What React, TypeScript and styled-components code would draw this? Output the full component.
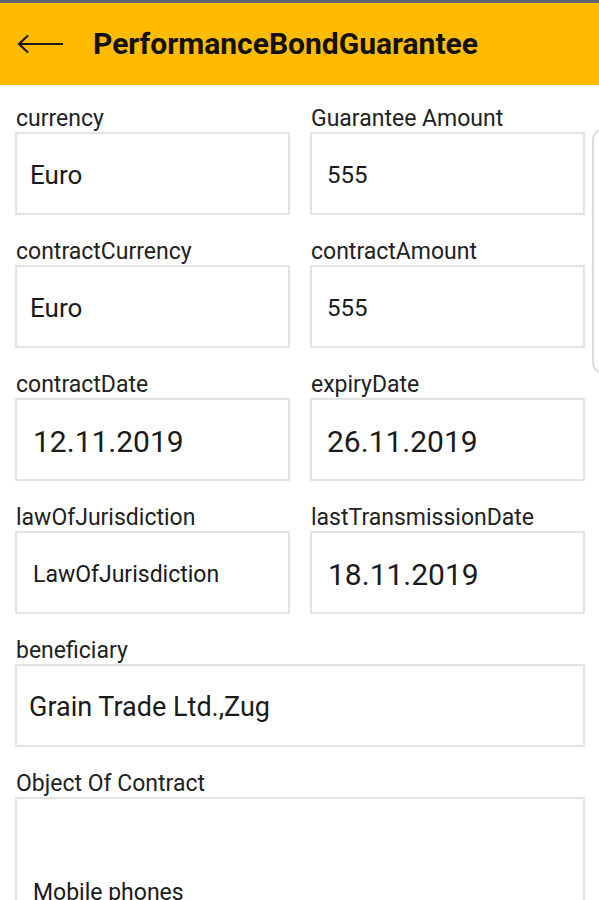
import React from "react";
import styled, { createGlobalStyle } from "styled-components";

const Global = createGlobalStyle`
  html, body { margin: 0; padding: 0; background: #ffffff; }
  body { font-family: Roboto, "Noto Sans", "Liberation Sans", sans-serif; color: #1f1f1f; overflow: hidden; }
  * { box-sizing: border-box; }
`;

const Screen = styled.div`
  position: relative;
  width: 599px;
  height: 900px;
  overflow: hidden;
  background: #ffffff;
`;

const StatusStrip = styled.div`
  height: 3px;
  background: #5d6770;
`;

const Toolbar = styled.header`
  height: 82px;
  background: #ffbb00;
  display: flex;
  align-items: center;
  padding-left: 17px;
  gap: 28px;
`;

const BackButton = styled.button`
  border: 0;
  background: transparent;
  padding: 0;
  width: 48px;
  height: 24px;
  display: flex;
  align-items: center;
`;

const Title = styled.h1`
  margin: 0;
  font-family: Roboto, "Liberation Sans", sans-serif;
  font-weight: 700;
  font-size: 30px;
  line-height: 36px;
  color: #111;
  letter-spacing: 0;
`;

const Form = styled.main`
  padding: 20px 14px 0 15px;
  display: grid;
  grid-template-columns: 275px 275px;
  column-gap: 20px;
  row-gap: 23px;
`;

const Field = styled.div<{ $wide?: boolean }>`
  display: flex;
  flex-direction: column;
  grid-column: ${(p) => (p.$wide ? "1 / span 2" : "auto")};
`;

const Label = styled.label`
  font-size: 23px;
  line-height: 27px;
  height: 27px;
  color: #222;
  padding-left: 1px;
  white-space: nowrap;
`;

const Box = styled.div<{ $size: number; $pad: number; $height?: number; $top?: number }>`
  height: ${(p) => p.$height ?? 83}px;
  border: 2px solid #e3e3e3;
  background: #fff;
  display: flex;
  align-items: ${(p) => (p.$top ? "flex-start" : "center")};
  padding-left: ${(p) => p.$pad}px;
  padding-top: ${(p) => p.$top ?? 4}px;
  font-size: ${(p) => p.$size}px;
  line-height: 1.2;
  color: #1a1a1a;
  white-space: nowrap;
`;

const SideHandle = styled.div`
  position: absolute;
  left: 592px;
  top: 129px;
  width: 24px;
  height: 244px;
  border: 2px solid #dcdcdc;
  border-radius: 10px;
  background: #fff;
`;

type F = { label: string; value: string; size: number; pad: number; wide?: boolean; height?: number; top?: number };

const fields: F[] = [
  { label: "currency", value: "Euro", size: 26, pad: 13 },
  { label: "Guarantee Amount", value: "555", size: 24, pad: 15 },
  { label: "contractCurrency", value: "Euro", size: 26, pad: 13 },
  { label: "contractAmount", value: "555", size: 24, pad: 15 },
  { label: "contractDate", value: "12.11.2019", size: 30, pad: 16 },
  { label: "expiryDate", value: "26.11.2019", size: 30, pad: 15 },
  { label: "lawOfJurisdiction", value: "LawOfJurisdiction", size: 23, pad: 16 },
  { label: "lastTransmissionDate", value: "18.11.2019", size: 30, pad: 16 },
  { label: "beneficiary", value: "Grain Trade Ltd.,Zug", size: 27, pad: 12, wide: true },
  { label: "Object Of Contract", value: "Mobile phones", size: 23, pad: 16, wide: true, height: 200, top: 80 },
];

export default function App() {
  return (
    <Screen>
      <Global />
      <StatusStrip />
      <Toolbar>
        <BackButton aria-label="back">
          <svg width="48" height="20" viewBox="0 0 48 20" fill="none">
            <path d="M2 10 H46" stroke="#1a1a1a" strokeWidth="2.2" />
            <path d="M11 1.5 L2 10 L11 18.5" stroke="#1a1a1a" strokeWidth="2.2" strokeLinejoin="miter" />
          </svg>
        </BackButton>
        <Title>PerformanceBondGuarantee</Title>
      </Toolbar>
      <Form>
        {fields.map((f) => (
          <Field key={f.label} $wide={f.wide}>
            <Label>{f.label}</Label>
            <Box $size={f.size} $pad={f.pad} $height={f.height} $top={f.top}>
              {f.value}
            </Box>
          </Field>
        ))}
      </Form>
      <SideHandle />
    </Screen>
  );
}
